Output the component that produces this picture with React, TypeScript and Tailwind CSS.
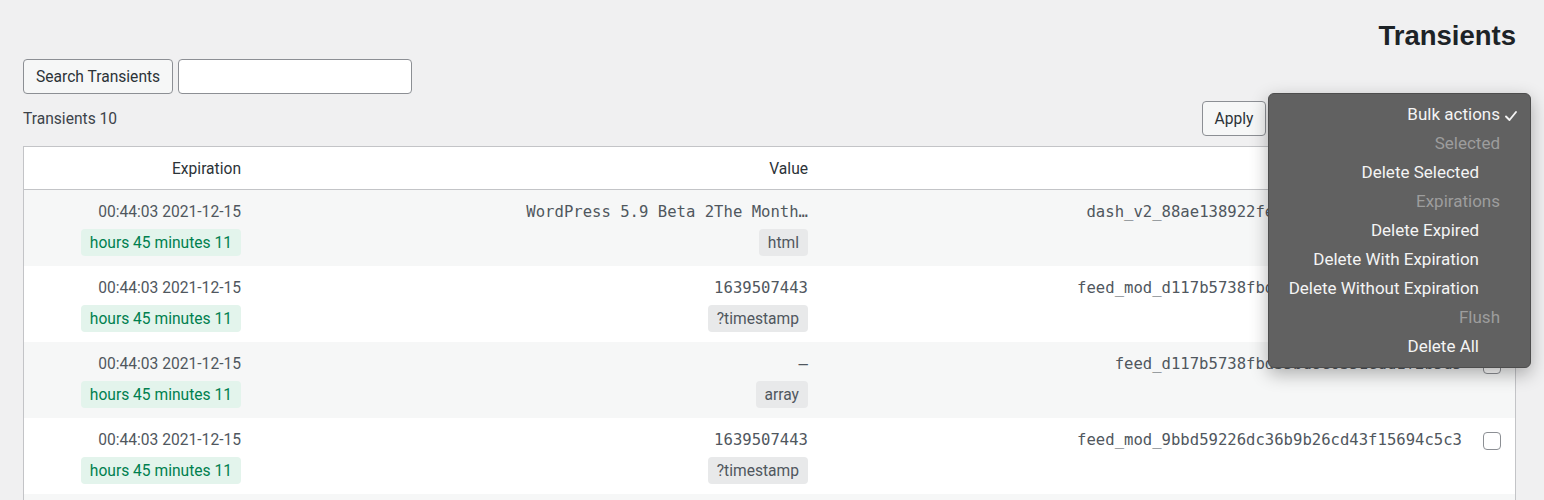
import React from "react";

const sans = "font-['Roboto','Noto_Sans',sans-serif]";
const mono = "font-['DejaVu_Sans_Mono','Liberation_Mono',monospace]";

type Row = { value: string; type: string; name: string };

const rows: Row[] = [
  { value: "WordPress 5.9 Beta 2The Month\u2026", type: "html", name: "dash_v2_88ae138922fe95674369bd50e6b5d5b8" },
  { value: "1639507443", type: "?timestamp", name: "feed_mod_d117b5738fbd35bd8e0351edd1f2b5d5" },
  { value: "\u2014", type: "array", name: "feed_d117b5738fbd35bd8e0351edd1f2b5d5" },
  { value: "1639507443", type: "?timestamp", name: "feed_mod_9bbd59226dc36b9b26cd43f15694c5c3" },
  { value: "\u2014", type: "array", name: "feed_9bbd59226dc36b9b26cd43f15694c5c3" },
];

function Checkbox() {
  return <div className="h-[18px] w-[18px] rounded-[4px] border border-[#8c8f94] bg-white" />;
}

function MenuItem({ label, kind }: { label: string; kind: "item" | "header" | "checked" }) {
  if (kind === "checked") {
    return (
      <div className="flex h-[29px] items-center justify-end gap-[4px] pr-[12px] text-[#f4f4f4]">
        <span>{label}</span>
        <svg width="14" height="14" viewBox="0 0 14 14" className="mt-[2px]">
          <path d="M2 7.5 L5.5 11 L12 3" fill="none" stroke="#f4f4f4" strokeWidth="1.9" strokeLinecap="round" strokeLinejoin="round" />
        </svg>
      </div>
    );
  }
  if (kind === "header") {
    return <div className="flex h-[29px] items-center justify-end pr-[30px] text-[#9d9d9d]">{label}</div>;
  }
  return <div className="flex h-[29px] items-center justify-end pr-[51px] text-[#f4f4f4]">{label}</div>;
}

export default function App() {
  return (
    <div className={`relative min-h-[500px] bg-[#f0f0f1] pl-[23px] pr-[28px] pt-[18px] ${sans} text-[15.6px] text-[#3c434a]`}>
      <div className="flex justify-end">
        <h1 className="font-['Liberation_Sans',Arial,sans-serif] text-[27.5px] font-bold leading-[36px] text-[#1d2327]">Transients</h1>
      </div>

      <div className="mt-[5px] flex items-center gap-[5px]">
        <button className="h-[35px] rounded-[4px] border border-[#8c8f94] bg-[#f6f7f7] px-[12px] pt-[3px] text-[15.6px] leading-none text-[#2c3338]">
          Search Transients
        </button>
        <div className="h-[35px] w-[234px] rounded-[4px] border border-[#8c8f94] bg-white" />
      </div>

      <div className="mt-[7px] flex h-[35px] items-center justify-between">
        <span className="pt-[2px] text-[#3c434a]">Transients 10</span>
        <div className="flex items-center gap-[4px]">
          <button className="h-[35px] w-[64px] rounded-[4px] border border-[#8c8f94] bg-[#f6f7f7] pt-[3px] text-[15.6px] leading-none text-[#2c3338]">
            Apply
          </button>
          <div className="h-[35px] w-[246px] rounded-[4px] border border-[#8c8f94] bg-white" />
        </div>
      </div>

      <div className="mt-[10px] border border-[#c3c4c7] bg-white">
        <div className="grid h-[43px] grid-cols-[227px_567px_1fr_43px] items-center border-b border-[#c3c4c7] pt-[3px] text-[#2c3338]">
          <div className="pr-[10px] text-right">Expiration</div>
          <div className="pr-[10px] text-right">Value</div>
          <div className="pr-[10px] text-right">Name</div>
          <div className="pl-[11px]">
            <Checkbox />
          </div>
        </div>
        {rows.map((r, i) => (
          <div
            key={i}
            className={`grid h-[76px] grid-cols-[227px_567px_1fr_43px] ${i % 2 === 0 ? "bg-[#f6f7f7]" : "bg-white"}`}
          >
            <div className="flex flex-col items-end pr-[10px] pt-[12px]">
              <div className="h-[20px] leading-[20px] text-[#50575e]">00:44:03 2021-12-15</div>
              <div className="mt-[7px] h-[27px] rounded-[4px] bg-[#e3f4ec] px-[9px] pt-[1px] leading-[27px] text-[#00804f]">
                hours 45 minutes 11
              </div>
            </div>
            <div className="flex flex-col items-end pr-[10px] pt-[12px]">
              <div className={`h-[20px] leading-[20px] ${mono} text-[15.6px] text-[#50575e]`}>{r.value}</div>
              <div className="mt-[7px] h-[27px] rounded-[4px] bg-[#e8e9ea] px-[9px] pt-[1px] leading-[27px] text-[#50575e]">
                {r.type}
              </div>
            </div>
            <div className="flex flex-col items-end pr-[10px] pt-[12px]">
              <div className={`h-[20px] leading-[20px] ${mono} text-[15.6px] text-[#50575e]`}>{r.name}</div>
            </div>
            <div className="pl-[11px] pt-[14px]">
              <Checkbox />
            </div>
          </div>
        ))}
      </div>

      <div className="absolute left-[1268px] top-[93px] w-[263px] rounded-[6px] border border-[#4d4d4d] bg-[#616161] py-[6px] text-[17px] shadow-[0_6px_18px_rgba(0,0,0,0.3)]">
        <MenuItem label="Bulk actions" kind="checked" />
        <MenuItem label="Selected" kind="header" />
        <MenuItem label="Delete Selected" kind="item" />
        <MenuItem label="Expirations" kind="header" />
        <MenuItem label="Delete Expired" kind="item" />
        <MenuItem label="Delete With Expiration" kind="item" />
        <MenuItem label="Delete Without Expiration" kind="item" />
        <MenuItem label="Flush" kind="header" />
        <MenuItem label="Delete All" kind="item" />
      </div>
    </div>
  );
}
